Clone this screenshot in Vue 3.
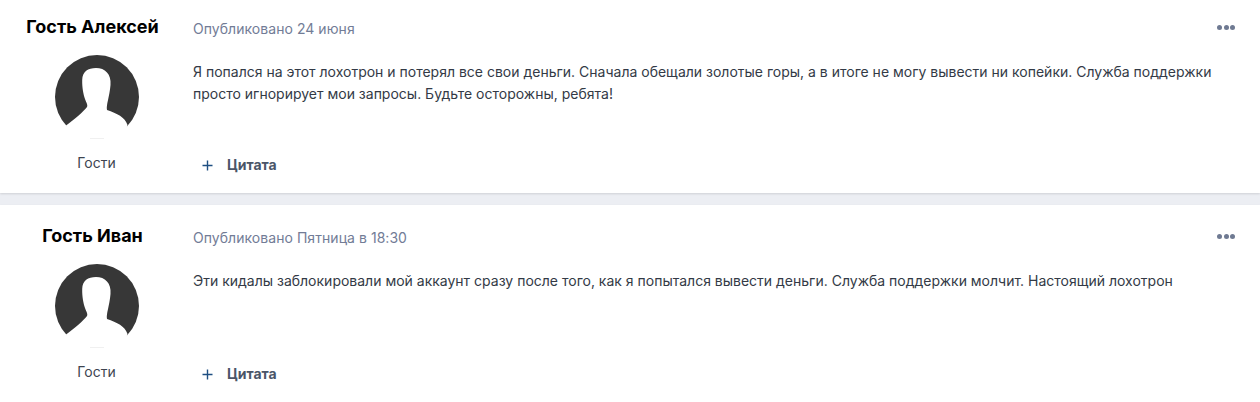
<script setup>
const posts = [
  {
    id: 1,
    author: 'Гость Алексей',
    date: 'Опубликовано 24 июня',
    text: 'Я попался на этот лохотрон и потерял все свои деньги. Сначала обещали золотые горы, а в итоге не могу вывести ни копейки. Служба поддержки просто игнорирует мои запросы. Будьте осторожны, ребята!'
  },
  {
    id: 2,
    author: 'Гость Иван',
    date: 'Опубликовано Пятница в 18:30',
    text: 'Эти кидалы заблокировали мой аккаунт сразу после того, как я попытался вывести деньги. Служба поддержки молчит. Настоящий лохотрон'
  }
]
</script>

<template>
  <div class="feed">
    <article v-for="post in posts" :key="post.id" class="post">
      <aside class="author">
        <h3 class="author-name">{{ post.author }}</h3>
        <svg class="avatar" viewBox="0 0 84 84" width="84" height="84">
          <circle cx="42" cy="42" r="42" fill="#373737" />
          <path
            d="M41 13 C33 13 27.4 16.5 27.2 25 C27 33 28.6 40 30 44 C31.5 48 33 50 32 52 C29 56 19 65 11 70.5 L16 84 L68 84 L72.5 70 C70 62 62 58.5 52 55 C51 50 54.5 42 55.5 30 C56.5 19 50 13 41 13 Z"
            fill="#fff"
          />
        </svg>
        <div class="avatar-line"></div>
        <div class="group">Гости</div>
      </aside>
      <div class="body">
        <div class="meta">
          <span class="date">{{ post.date }}</span>
          <span class="dots"><i></i><i></i><i></i></span>
        </div>
        <p class="text">{{ post.text }}</p>
        <div class="actions">
          <svg class="plus" viewBox="0 0 11 11" width="11" height="11">
            <path d="M5.5 0.5 V10.5 M0.5 5.5 H10.5" stroke="#1f4f82" stroke-width="1.4" fill="none" />
          </svg>
          <span class="quote">Цитата</span>
        </div>
      </div>
    </article>
  </div>
</template>

<style scoped>
.feed {
  width: 1260px;
  height: 402px;
  overflow: hidden;
  background: #eceef3;
  font-family: Inter, "Noto Sans", sans-serif;
}

.post {
  display: flex;
  height: 197px;
  margin-bottom: 12px;
  background: #fff;
  box-shadow: 0 1px 2px rgba(0, 0, 0, 0.12);
}

.post:first-child {
  margin-top: -4px;
}

.author {
  width: 193px;
  flex: none;
  display: flex;
  flex-direction: column;
  align-items: center;
}

.author-name {
  margin: 19px 8px 0 0;
  font-size: 18px;
  line-height: 24px;
  font-weight: 700;
  color: #000;
  white-space: nowrap;
}

.avatar {
  display: block;
  margin-top: 16px;
}

.avatar-line {
  width: 14px;
  height: 1px;
  margin-top: -1px;
  background: #f0f0f0;
}

.group {
  margin-top: 14px;
  font-size: 14px;
  line-height: 20px;
  color: #3d4450;
}

.body {
  flex: 1;
  min-width: 0;
  padding: 0 24px 0 0;
  display: flex;
  flex-direction: column;
}

.meta {
  display: flex;
  align-items: center;
  justify-content: space-between;
  margin-top: 23px;
  height: 20px;
}

.date {
  font-size: 14px;
  line-height: 20px;
  letter-spacing: 0.05px;
  color: #727c96;
}

.dots {
  display: flex;
  gap: 1.5px;
  margin: 0 1px 3px 0;
}

.dots i {
  width: 5px;
  height: 5px;
  border-radius: 50%;
  background: #6f7a92;
}

.text {
  margin: 22px 0 0;
  width: 1030px;
  font-size: 14px;
  line-height: 22px;
  color: #333a46;
  flex: 1;
}

.actions {
  display: flex;
  align-items: center;
  height: 20px;
  margin-bottom: 18px;
  padding-left: 9px;
}

.quote {
  margin-left: 14px;
  font-size: 14px;
  font-weight: 700;
  line-height: 20px;
  color: #4a5568;
}
</style>

<style>
html, body {
  margin: 0;
  background: #fff;
}
</style>
